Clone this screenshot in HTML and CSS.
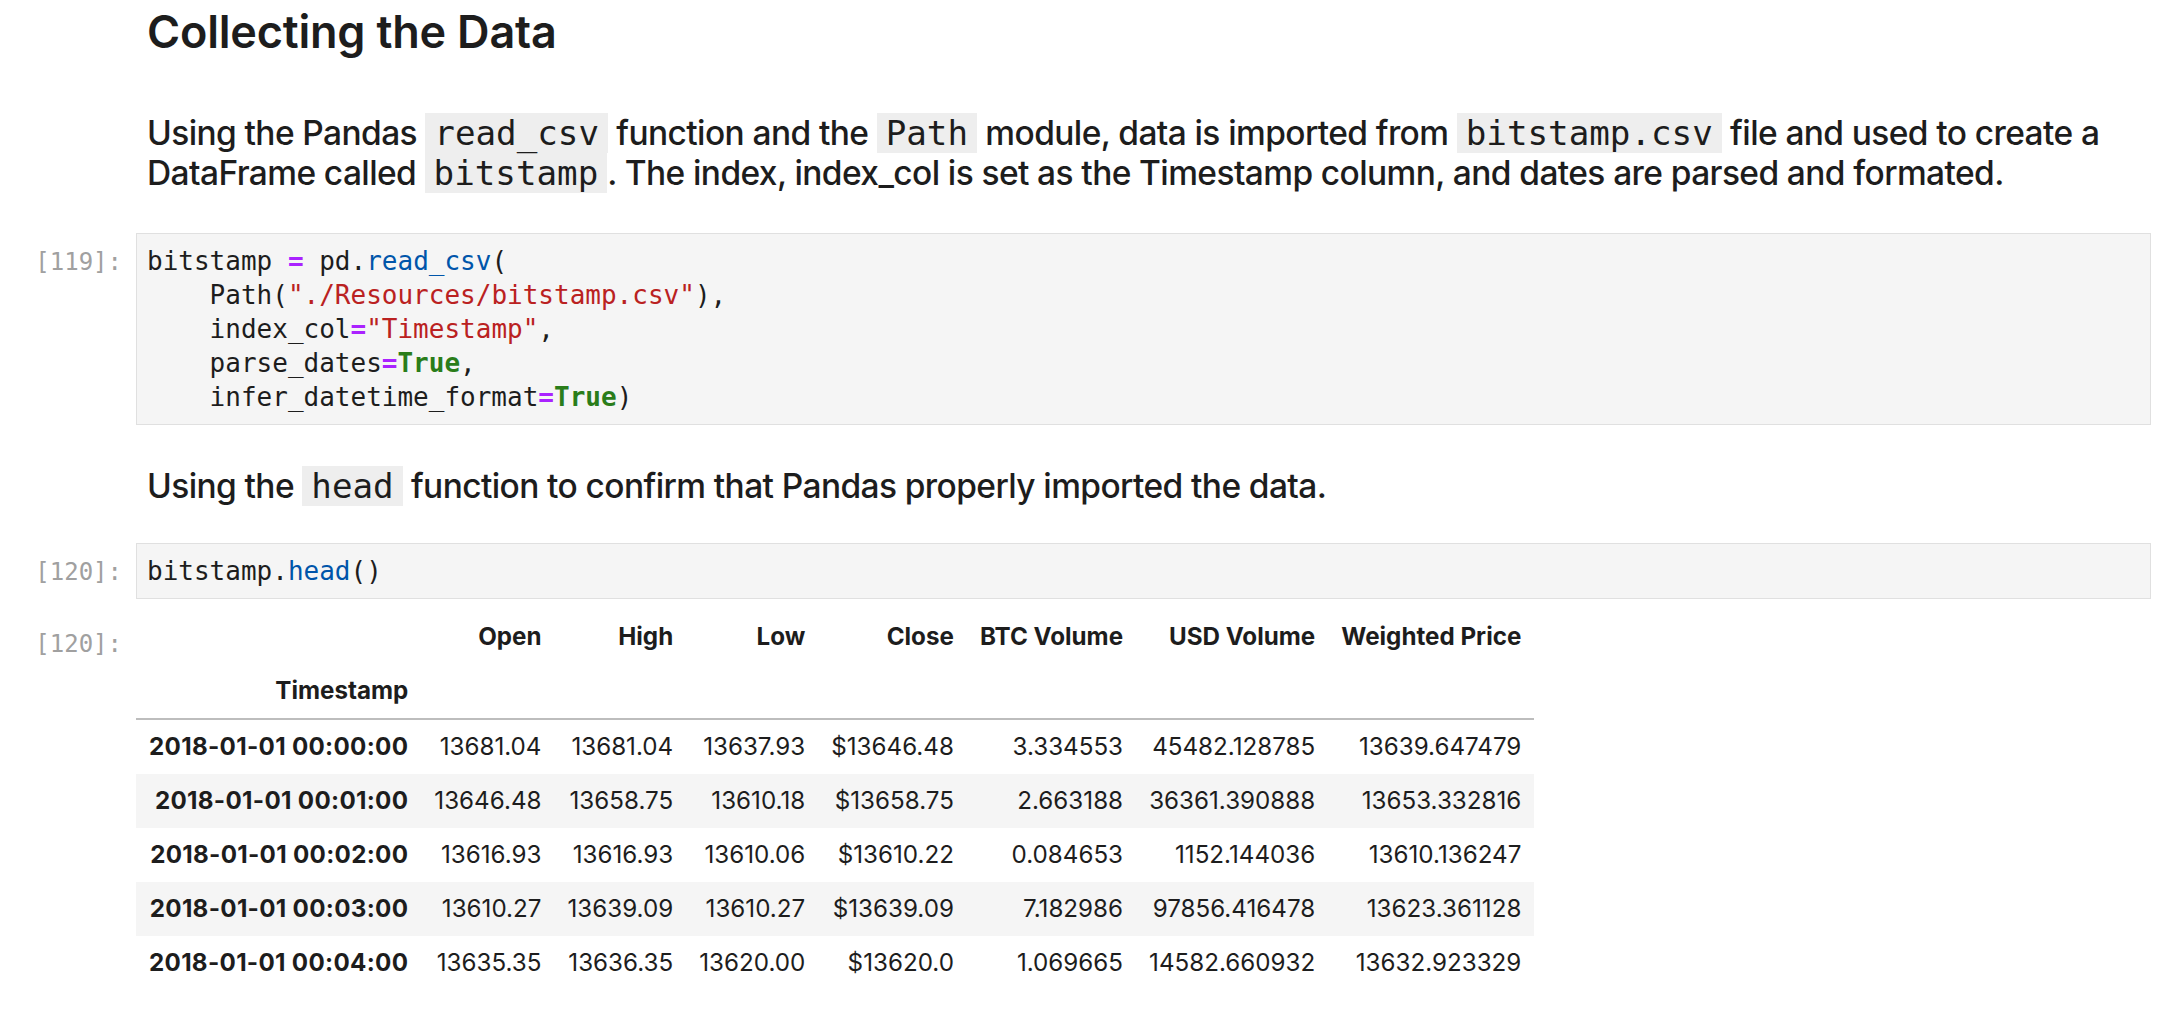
FILE: index.html
```html
<!DOCTYPE html>
<html lang="en">
<head>
<meta charset="utf-8">
<title>Collecting the Data</title>
<link rel="stylesheet" href="styles.css">
</head>
<body>
<div class="nb">
  <div class="cell md">
    <div class="prompt"></div>
    <div class="content"><h2>Collecting the Data</h2></div>
  </div>

  <div class="cell md p1">
    <div class="prompt"></div>
    <div class="content"><p>Using the Pandas <code><span class="ct">read_csv</span></code> function and the <code><span class="ct">Path</span></code> module, data is imported from <code><span class="ct">bitstamp.csv</span></code> file and used to create a DataFrame called <code><span class="ct">bitstamp</span></code>. The index, index_col is set as the Timestamp column, and dates are parsed and formated.</p></div>
  </div>

  <div class="cell code c1">
    <div class="prompt">[119]:</div>
    <div class="content"><pre class="code-box">bitstamp <span class="o">=</span> pd<span class="p">.</span><span class="f">read_csv</span>(
    Path(<span class="s">"./Resources/bitstamp.csv"</span>),
    index_col<span class="o">=</span><span class="s">"Timestamp"</span>,
    parse_dates<span class="o">=</span><span class="k">True</span>,
    infer_datetime_format<span class="o">=</span><span class="k">True</span>)</pre></div>
  </div>

  <div class="cell md p2">
    <div class="prompt"></div>
    <div class="content"><p>Using the <code><span class="ct">head</span></code> function to confirm that Pandas properly imported the data.</p></div>
  </div>

  <div class="cell code c2">
    <div class="prompt">[120]:</div>
    <div class="content"><pre class="code-box">bitstamp<span class="p">.</span><span class="f">head</span>()</pre></div>
  </div>

  <div class="cell output">
    <div class="prompt">[120]:</div>
    <div class="content">
      <table class="df">
        <thead>
          <tr><th></th><th>Open</th><th>High</th><th>Low</th><th>Close</th><th>BTC Volume</th><th>USD Volume</th><th>Weighted Price</th></tr>
          <tr class="names"><th>Timestamp</th><th></th><th></th><th></th><th></th><th></th><th></th><th></th></tr>
        </thead>
        <tbody>
          <tr><th>2018-01-01 00:00:00</th><td>13681.04</td><td>13681.04</td><td>13637.93</td><td>$13646.48</td><td>3.334553</td><td>45482.128785</td><td>13639.647479</td></tr>
          <tr><th>2018-01-01 00:01:00</th><td>13646.48</td><td>13658.75</td><td>13610.18</td><td>$13658.75</td><td>2.663188</td><td>36361.390888</td><td>13653.332816</td></tr>
          <tr><th>2018-01-01 00:02:00</th><td>13616.93</td><td>13616.93</td><td>13610.06</td><td>$13610.22</td><td>0.084653</td><td>1152.144036</td><td>13610.136247</td></tr>
          <tr><th>2018-01-01 00:03:00</th><td>13610.27</td><td>13639.09</td><td>13610.27</td><td>$13639.09</td><td>7.182986</td><td>97856.416478</td><td>13623.361128</td></tr>
          <tr><th>2018-01-01 00:04:00</th><td>13635.35</td><td>13636.35</td><td>13620.00</td><td>$13620.0</td><td>1.069665</td><td>14582.660932</td><td>13632.923329</td></tr>
        </tbody>
      </table>
    </div>
  </div>
</div>
</body>
</html>
```

FILE: styles.css
```css
html, body {
  margin: 0;
  background: #ffffff;
}

body {
  font-family: Inter, "Noto Sans", "Liberation Sans", sans-serif;
  color: #1d1d1d;
}

.nb {
  padding: 5px 29px 0 0;
}

.cell {
  display: flex;
  align-items: baseline;
}

.cell.md {
  align-items: flex-start;
}

.prompt {
  flex: 0 0 122px;
  padding-right: 14px;
  text-align: right;
  font-family: "DejaVu Sans Mono", "Liberation Mono", monospace;
  font-size: 24px;
  line-height: 34px;
  color: #a0a0a0;
}

.content {
  flex: 1 1 auto;
  min-width: 0;
}

.md .content {
  padding-left: 11px;
}

h2 {
  margin: 0;
  font-size: 45px;
  line-height: 54px;
  font-weight: 600;
  letter-spacing: -0.2px;
  color: #1d1d1d;
}

.md p {
  margin: 0;
  font-size: 33.5px;
  line-height: 39.5px;
  font-weight: 500;
  letter-spacing: -0.6px;
}

.md code {
  font-family: "DejaVu Sans Mono", "Liberation Mono", monospace;
  font-size: 34.2px;
  font-weight: 400;
  letter-spacing: 0;
  line-height: 1;
  padding: 0 9px;
  background: #eeeeee;
  color: #1d1d1d;
}

.md code .ct {
  position: relative;
}

.p1 { margin-top: 55px; }
.c1 { margin-top: 40px; }
.p2 { margin-top: 42px; }
.c2 { margin-top: 36px; }
.output { margin-top: 11px; }

.code-box {
  margin: 0;
  background: #f5f5f5;
  border: 1px solid #e0e0e0;
  padding: 10px 10px;
  font-family: "DejaVu Sans Mono", "Liberation Mono", monospace;
  font-size: 26px;
  line-height: 34px;
  color: #1d1d1d;
  white-space: pre;
}

.code-box .o { color: #aa22ff; font-weight: bold; }
.code-box .k { color: #2a7d1a; font-weight: bold; }
.code-box .s { color: #ba2121; }
.code-box .f { color: #0055aa; }
.code-box .p { color: #1d1d1d; }

.df {
  border-collapse: collapse;
  border-spacing: 0;
  font-size: 24.2px;
  color: #1d1d1d;
}

.df th,
.df td {
  padding: 12px 13px;
  line-height: 30px;
  text-align: right;
  vertical-align: middle;
  white-space: nowrap;
}

.df th {
  font-weight: 700;
}

.df tbody th {
  letter-spacing: 0.3px;
}

.df td {
  font-weight: 400;
}

.df thead tr.names th {
  border-bottom: 2px solid #bdbdbd;
}

.df tbody tr:nth-child(even) {
  background: #f5f5f5;
}
```
